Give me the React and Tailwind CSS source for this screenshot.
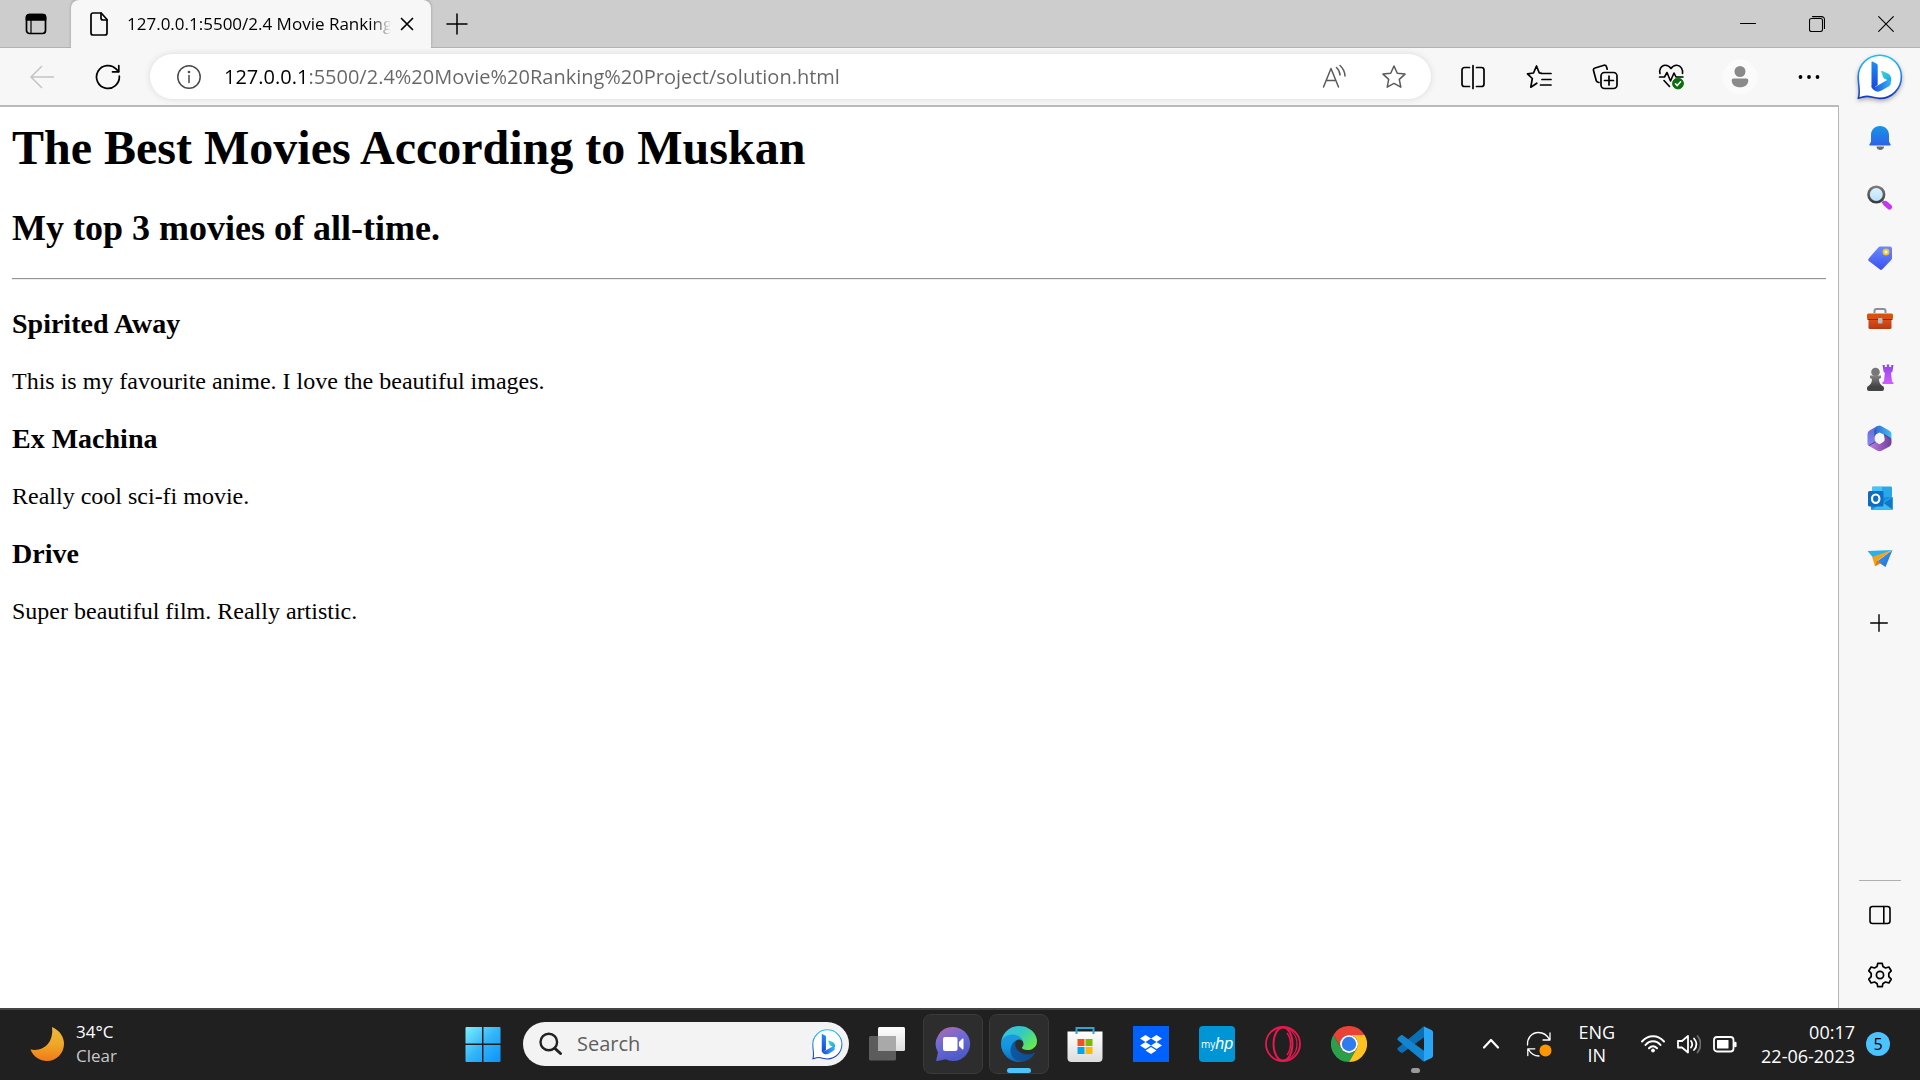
import React from "react";

const ui = "font-['Open_Sans','Noto_Sans',sans-serif]";

function Line({ size = 24, sw = 1.5, className = "", children, box }) {
  return (
    <svg
      width={size}
      height={size}
      viewBox={`0 0 ${box || size} ${box || size}`}
      fill="none"
      stroke="currentColor"
      strokeWidth={sw}
      strokeLinecap="round"
      strokeLinejoin="round"
      className={`shrink-0 ${className}`}
      aria-hidden="true"
    >
      {children}
    </svg>
  );
}

function Art({ size = 26, box, children, className = "" }) {
  return (
    <svg
      width={size}
      height={size}
      viewBox={`0 0 ${box || size} ${box || size}`}
      className={`shrink-0 ${className}`}
      aria-hidden="true"
    >
      {children}
    </svg>
  );
}

function Grad({ id, stops, x1 = 0, y1 = 0, x2 = 0, y2 = 1 }) {
  return (
    <linearGradient id={id} x1={x1} y1={y1} x2={x2} y2={y2}>
      {stops.map((c, i) => (
        <stop key={c + i} offset={i / (stops.length - 1)} stopColor={c} />
      ))}
    </linearGradient>
  );
}

function Bing({ size, id, className }) {
  return (
    <Art size={size} box={46} className={className}>
      <defs>
        <Grad id={id + "a"} stops={["#14c3f5", "#1f7cf0", "#1238c4"]} />
        <Grad id={id + "b"} stops={["#1d8df5", "#1747dd"]} />
        <Grad id={id + "c"} stops={["#36e0c8", "#1f9cf5"]} x2={1} />
        <Grad id={id + "d"} stops={["#1648dc", "#36b4fa"]} x2={1} y2={0} />
      </defs>
      <path
        d="M1.3 44.3C3.6 38 1.2 31 1.2 22.8A21.6 21.6 0 1 1 22.8 44.4C17.5 44.4 14 42.2 9.5 42.4C6.500 42.500 4 43.500 1.300 44.300Z"
        fill="#fff"
        stroke={`url(#${id}a)`}
        strokeWidth="1.6"
        strokeLinejoin="round"
      />
      <path d="M14.5 8.500C14.500 7.600 15 7.400 15.800 7.800L19.300 9.500C20.200 10 20.700 10.600 20.700 11.600V31L15.500 34.500C14.800 34 14.500 33.200 14.500 32Z" fill={`url(#${id}b)`} />
      <path d="M24.200 17.800C24 17 24.600 16.700 25.400 17L30.500 19.300C33.500 20.700 35 24 34 28L27.800 24.800C26.800 24.300 26.300 23.500 26 22.700Z" fill={`url(#${id}c)`} />
      <path d="M14.600 31.500C15.500 33.500 17.800 33.200 19.500 32.200L30.600 25.800C33 26.500 34.500 28 33.800 30C33.500 31 32.800 31.700 32 32.200L24.500 36.600C22 38 19.500 38 17.500 36.600C15.500 35.300 14.500 33.500 14.600 31.500Z" fill={`url(#${id}d)`} />
    </Art>
  );
}

function TitleBar() {
  return (
    <header className="flex h-12 shrink-0 border-b border-[#b2b2b2] bg-[#cdcdcd]">
      <button aria-label="Tab actions menu" className="flex w-[71px] items-center justify-center">
        <Line size={22} sw={1.7}>
          <rect x="1.500" y="1.500" width="19" height="19" rx="3" />
          <path d="M1.500 4a2.500 2.500 0 0 1 2.500-2.500h14A2.500 2.500 0 0 1 20.500 4v3h-19Z" fill="currentColor" />
          <path d="M6 7v13" strokeWidth="1.200" />
        </Line>
      </button>
      <div className="-mb-px flex w-[360px] items-center rounded-t-lg bg-[#f7f7f7] pl-4 pr-[17px] shadow-[0_-1px_3px_rgba(0,0,0,0.25)] [clip-path:inset(0_-4px_0_-4px)]">
        <Line size={24} sw={1.7}>
          <path d="M6 1h8.200L20 7.500V21a2 2 0 0 1-2 2H6a2 2 0 0 1-2-2V3a2 2 0 0 1 2-2Z" />
          <path d="M14 1v5a2 2 0 0 0 2 2h4" />
        </Line>
        <span className="ml-4 w-[270px] whitespace-nowrap text-[17px] leading-6 text-black [mask-image:linear-gradient(to_right,black_244px,transparent_264px)]">
          127.0.0.1:5500/2.4 Movie Ranking
        </span>
        <button aria-label="Close tab" className="ml-auto">
          <Line size={14} sw={1.7}>
            <path d="M1.500 1.500l11 11M12.500 1.500l-11 11" />
          </Line>
        </button>
      </div>
      <button aria-label="New tab" className="flex w-[52px] items-center justify-center">
        <Line size={22} sw={1.500}>
          <path d="M11 1v20M1 11h20" />
        </Line>
      </button>
      <div className="ml-auto flex text-black">
        <button aria-label="Minimize" className="flex w-[69px] items-center justify-center">
          <Line size={16} sw={1}><path d="M.5 7.500h15" /></Line>
        </button>
        <button aria-label="Restore" className="flex w-[69px] items-center justify-center">
          <Line size={16} sw={1.100}>
            <rect x=".5" y="2.500" width="13" height="13" rx="2" />
            <path d="M3.500 .6H12.500a3 3 0 0 1 3 3V12.500" />
          </Line>
        </button>
        <button aria-label="Close" className="flex w-[69px] items-center justify-center">
          <Line size={16} sw={1.100}><path d="M.7 .7l14.600 14.600M15.300 .7L.7 15.300" /></Line>
        </button>
      </div>
    </header>
  );
}

function ToolButton({ label, children, className = "text-black" }) {
  return (
    <button aria-label={label} className={`flex h-11 w-[60px] shrink-0 items-center justify-center ${className}`}>
      {children}
    </button>
  );
}

const STAR = "M13 2l3.300 7.200 7.700.9-5.700 5.300 1.500 7.800L13 19.400 6.200 23.200l1.500-7.800L2 10.100l7.700-.9Z";

function Toolbar() {
  return (
    <div className="flex h-[59px] shrink-0 items-center border-b-2 border-[#bababa] bg-[#f7f7f7] pl-3">
      <div className="flex gap-[6px]">
        <ToolButton label="Back" className="text-[#c4c4c4]">
          <Line size={26}><path d="M24.500 13H2M12.500 2.500L2 13l10.500 10.500" /></Line>
        </ToolButton>
        <ToolButton label="Refresh">
          <Line size={26} sw={1.700}>
            <path d="M24.300 12A11.400 11.400 0 1 1 21.300 5.200L23.500 7.500" />
            <path d="M23.800 1.500V7.800H17.500" />
          </Line>
        </ToolButton>
      </div>
      <div className="ml-3 flex h-[45px] flex-1 items-center rounded-full bg-white pl-[27px] pr-6 shadow-[0_0_7px_rgba(0,0,0,0.12)]">
        <button aria-label="View site information" className="text-[#4a4a4a]">
          <Line size={24}>
            <circle cx="12" cy="12" r="11.200" />
            <path d="M12 10.500v7" />
            <circle cx="12" cy="7" r=".6" fill="currentColor" />
          </Line>
        </button>
        <input
          aria-label="Address and search bar"
          defaultValue="127.0.0.1:5500/2.4%20Movie%20Ranking%20Project/solution.html"
          className="ml-[23px] h-8 min-w-0 flex-1 bg-[linear-gradient(to_right,#000_82px,#666_82px)] bg-clip-text text-[20px] text-transparent outline-none"
        />
        <div className="flex items-center gap-[33px] text-[#5a5a5a]">
          <button aria-label="Read aloud">
            <Line size={26}>
              <path d="M1.500 23L9 4.500 16.500 23M4.300 16.500h9.500" />
              <path d="M14.500 3.500a11 11 0 0 1 3.500 7.500M18 1.500a15 15 0 0 1 5 10.500" />
            </Line>
          </button>
          <button aria-label="Add this page to favorites">
            <Line size={26}><path d={STAR} /></Line>
          </button>
        </div>
      </div>
      <div className="ml-3 flex gap-[6px]">
        <ToolButton label="Split screen">
          <Line size={26} sw={1.700}>
            <path d="M9.500 3.500H4.500a2.500 2.500 0 0 0-2.500 2.500v14a2.500 2.500 0 0 0 2.500 2.500h5M16.500 3.500h5A2.500 2.500 0 0 1 24 6v14a2.500 2.500 0 0 1-2.500 2.500h-5M13 1.500v23" />
          </Line>
        </ToolButton>
        <ToolButton label="Favorites">
          <Line size={26} sw={1.700}>
            <path d="M15 9.200l-1.700-.2L10.500 2 7.500 9 1.500 9.800l4.800 4.700-1.500 8.700 6-4" />
            <path d="M15.500 9.500H25M16 15.500h9M14.500 21H25" />
          </Line>
        </ToolButton>
        <ToolButton label="Collections">
          <Line size={26} sw={1.700}>
            <path d="M7 18.500l-1.500-.5a2 2 0 0 1-1.300-1.500L1.500 6.500A2 2 0 0 1 3 4L12 1.300a2 2 0 0 1 2.500 1.500l.7 2.400" />
            <rect x="9" y="8.500" width="16" height="16" rx="3.500" />
            <path d="M17 12v9M12.500 16.500h9" />
          </Line>
        </ToolButton>
        <ToolButton label="Browser essentials">
          <Line size={27} sw={1.600}>
            <path d="M2 10.500C1 7 2.800 2.500 7 2.200c3-.2 4.700 1.300 6 3.300 1.300-2 3-3.500 6-3.300 4.200.3 6 4.800 5.500 8.300" />
            <path d="M1.500 14h5L9 9.500l3.500 8.500 3.500-8 2 4h7M6 17.500l5.500 6" />
            <circle cx="20" cy="20.500" r="5.500" fill="#0b6f12" stroke="#0b6f12" strokeWidth=".8" />
            <path d="M17.500 20.800l1.800 1.800 3.300-3.800" stroke="#fff" strokeWidth="1.500" />
          </Line>
        </ToolButton>
      </div>
      <div className="ml-[9px] flex gap-[9px]">
        <ToolButton label="Profile">
          <Art size={36}>
            <circle cx="18" cy="18" r="17.500" fill="#fbfbfb" />
            <circle cx="18" cy="12.500" r="5.500" fill="#8a8a8a" />
            <path d="M11.500 19.500h13a1.800 1.800 0 0 1 1.800 1.800c0 4.500-3.500 7-8.300 7s-8.300-2.500-8.300-7a1.800 1.800 0 0 1 1.800-1.800Z" fill="#8a8a8a" />
          </Art>
        </ToolButton>
        <ToolButton label="Settings and more">
          <Art size={22}>
            {[2.500, 11, 19.500].map((x) => <circle key={x} cx={x} cy="11" r="1.900" />)}
          </Art>
        </ToolButton>
      </div>
    </div>
  );
}

const movies = [
  ["Spirited Away", "This is my favourite anime. I love the beautiful images."],
  ["Ex Machina", "Really cool sci-fi movie."],
  ["Drive", "Super beautiful film. Really artistic."],
];

function Page() {
  return (
    <main className="min-h-0 flex-1 border-r border-[#b5b5b5] bg-white px-3 pt-[13px] font-['Liberation_Serif',serif] text-black">
      <h1 className="mb-8 text-[48px] font-bold leading-[55px]">The Best Movies According to Muskan</h1>
      <h2 className="mb-[29px] text-[36px] font-bold leading-[42px]">My top 3 movies of all-time.</h2>
      <hr className="mb-[29px] h-px border-0 bg-[#949494] shadow-[0_1px_0_#eeeeee]" />
      {movies.map(([name, note]) => (
        <section key={name} className="mb-7">
          <h3 className="mb-7 text-[28px] font-bold leading-8">{name}</h3>
          <p className="text-[24px] leading-[27px]">{note}</p>
        </section>
      ))}
    </main>
  );
}

function SideIcons() {
  return [
    ["Notifications", (
      <Art>
        <defs><Grad id="bell" stops={["#1a94e6", "#2b63e8"]} /></defs>
        <path d="M9.500 21.500h7.500c0 2-1.500 3.500-3.700 3.500s-3.800-1.500-3.800-3.500Z" fill="#6b6f75" />
        <path d="M13 1c5.500 0 9 4 9 9v6.500l1.700 3.200c.2.500 0 .8-.6.8H2.900c-.6 0-.8-.3-.6-.8L4 16.500V10C4 5 7.500 1 13 1Z" fill="url(#bell)" />
      </Art>
    )],
    ["Search", (
      <Art>
        <defs>
          <Grad id="lens" stops={["#e2f2ff", "#b5e0f8"]} />
          <Grad id="rim" stops={["#7a7a7a", "#3c3c3c"]} />
        </defs>
        <path d="M15.500 16.500l3 2.500" stroke="#777" strokeWidth="3" />
        <circle cx="9.300" cy="9.500" r="7.800" fill="url(#lens)" stroke="url(#rim)" strokeWidth="2.600" />
        <path d="M18.500 18.500l4 3.500" stroke="#c436f2" strokeWidth="5" strokeLinecap="round" />
      </Art>
    )],
    ["Shopping", (
      <Art>
        <defs><Grad id="tag" stops={["#6a8cff", "#3d50ec"]} /></defs>
        <path d="M13.500 1.500h9.500a2 2 0 0 1 2 2v9.500c0 1-.3 1.700-1 2.300l-8.700 9c-.8.800-1.800.8-2.600 0L1.800 16c-.8-.8-.8-1.800 0-2.600l9.500-11c.6-.6 1.200-.9 2.200-.9Z" fill="url(#tag)" />
        <circle cx="19" cy="7" r="2.600" fill="#e6eaff" stroke="#f5c518" strokeWidth="1.700" />
      </Art>
    )],
    ["Tools", (
      <Art size={28}>
        <defs><Grad id="case" stops={["#e3561f", "#b83a10"]} /></defs>
        <path d="M8.500 9V7a2 2 0 0 1 2-2h7a2 2 0 0 1 2 2v2" fill="none" stroke="#8b8f96" strokeWidth="2" />
        <rect x="2.500" y="13" width="23" height="12" rx="1.500" fill="url(#case)" />
        <path d="M2.500 9.500h23a1.500 1.500 0 0 1 1.500 1.500v2.800c0 .8-.7 1.500-1.500 1.500h-23C1.700 15.300 1 14.600 1 13.800V11a1.500 1.500 0 0 1 1.500-1.500Z" fill="#d9500f" />
        <path d="M1.500 15.500h25" stroke="#8e2c0a" />
        <rect x="12" y="14" width="4.500" height="5.500" rx="1" fill="#b9bdc3" />
      </Art>
    )],
    ["Games", (
      <Art size={28}>
        <defs>
          <Grad id="rook" stops={["#8f45e8", "#d65bff"]} />
          <Grad id="pawn" stops={["#858585", "#444"]} />
        </defs>
        <path d="M16.500 1h2.300v2h2V.5h2.400V3h2V1h2.300l-1 6.500-1.500 1.500 1 8.500 1.500 1.200V20H16.500v-2l1.500-.8L18.800 9l-1.300-1.500Z" fill="url(#rook)" />
        <circle cx="9.500" cy="8" r="4.300" fill="#777" />
        <path d="M4 11.500h11v2.500l-2 .9c.2 3.500 1 5 4 7.500H2c3-2.500 3.800-4 4-7.500l-2-.9Z" fill="url(#pawn)" />
        <rect x="1" y="22" width="17" height="5" rx="2" fill="#444" />
      </Art>
    )],
    ["Microsoft 365", (
      <Art size={27}>
        <defs>
          <Grad id="m1" stops={["#5b6ad8", "#8a86f2"]} />
          <Grad id="m2" stops={["#2d6bd2", "#44c0f0"]} x2={1} y2={0} />
          <Grad id="m3" stops={["#c07fdc", "#713f9f"]} x2={1} y2={0} />
        </defs>
        <path d="M10 1.700L3.500 5.500A4 4 0 0 0 1.500 9v9.500c0 1 .4 1.600 1 2l6.500-3.300V9L14.500 6V.7c-2 0-3.500.4-4.500 1Z" fill="url(#m1)" />
        <path d="M9 10V4.500c0-1.500.8-2.300 2-3 1.700-.9 3.500-.9 5 0l7.500 4.200A4 4 0 0 1 25.500 9v6L17.500 9.500l-4-2Z" fill="url(#m2)" />
        <path d="M2.300 20.200L9 16.500l4.500 2.800 5-3.500-.5-6.500 6 3.500c1 .8 1.500 1.500 1.500 3V18a4 4 0 0 1-2 3.400L16 25.500a5 5 0 0 1-5 0L3.500 21.300c-.5-.3-1-.6-1.200-1.100Z" fill="url(#m3)" />
        <path d="M9 4.500V11M24.500 13.500L18 9.500M3 20.500l7-4" stroke="#2b3f92" strokeWidth=".9" fill="none" />
        <circle cx="13.500" cy="13.500" r="4.900" fill="#f7f7f7" />
      </Art>
    )],
    ["Outlook", (
      <Art>
        <rect x="5" y="1.500" width="20" height="12" rx="1" fill="#28a8ea" />
        <rect x="5" y="2" width="10" height="10" fill="#50d0ff" opacity=".7" />
        <path d="M4 12h21.500v12a1 1 0 0 1-1 1H5a1 1 0 0 1-1-1Z" fill="#1490df" />
        <path d="M4.500 24.800L17 17l8.500-5v13Z" fill="#3cbcf2" />
        <path d="M25.500 12.500v12L16.500 18Z" fill="#0f78c8" />
        <rect x="1" y="6" width="15.500" height="15.500" rx="1.500" fill="#0f6cc4" />
        <ellipse cx="8.700" cy="13.700" rx="3.700" ry="4.200" fill="none" stroke="#fff" strokeWidth="2.200" />
      </Art>
    )],
    ["Drop", (
      <Art>
        <defs><Grad id="pl" stops={["#2fa3f2", "#2867e0"]} x2={1} y2={1} /></defs>
        <path d="M25.500 5L18.500 22 10 16.500Z" fill="url(#pl)" />
        <path d="M.5 6L25.500 5 6 12.500Z" fill="#2bb0ee" />
        <path d="M25.500 5L5.200 12 8 21.500 11 15.500Z" fill="#f5a21b" />
        <path d="M8 21.500L10 15.500l4 2.300Z" fill="#d97a12" />
      </Art>
    )],
  ];
}

function Sidebar() {
  return (
    <aside className="flex w-[81px] shrink-0 flex-col items-center bg-[#f7f7f7]">
      <button aria-label="Discover" className="mt-[6px] mb-[9px] flex h-[45px] w-[60px] items-center justify-center">
        <Bing size={46} id="side" className="drop-shadow-[0_2px_2px_rgba(0,0,0,0.3)]" />
      </button>
      {SideIcons().map(([name, icon]) => (
        <button key={name} aria-label={name} className="flex h-[60px] w-[60px] items-center justify-center">{icon}</button>
      ))}
      <button aria-label="Customize" className="mt-1 flex h-[60px] w-[60px] items-center justify-center pt-[2px] pr-[2px] text-black">
        <Line size={18} sw={1.400}><path d="M9 .7v16.600M.7 9h16.600" /></Line>
      </button>
      <div className="mt-auto h-px w-[42px] bg-[#b0b0b0]" />
      <button aria-label="Hide sidebar" className="mt-1 flex h-[60px] w-[60px] items-center justify-center text-black">
        <Line size={22} sw={1.600}>
          <rect x="1" y="2.500" width="20" height="17" rx="2.500" />
          <path d="M14.800 2.500v17" />
        </Line>
      </button>
      <button aria-label="Settings" className="mb-[3px] flex h-[60px] w-[60px] items-center justify-center text-black">
        <Line size={26} sw={1.700}>
          <path d="M10.800 1.300h4.400l.8 3.300 2.500 1.400 3.400-1 2.300 3.800-2.400 2.500v3.400l2.400 2.500-2.300 3.800-3.400-1L16 21.400l-.8 3.300h-4.400l-.8-3.300L7.500 20l-3.400 1-2.300-3.800 2.400-2.500v-3.400L1.800 8.800 4.100 5l3.400 1L10 4.600Z" />
          <circle cx="13" cy="13" r="3.600" />
        </Line>
      </button>
    </aside>
  );
}

function Tile({ label, active, mark, children }) {
  return (
    <button
      aria-label={label}
      className={`relative flex h-[60px] w-[60px] shrink-0 items-center justify-center rounded-lg border ${active ? "border-[#3a3a3a] bg-[#2d2d2d]" : "border-transparent"}`}
    >
      {children}
      {mark === "wide" && <span className="absolute bottom-0 h-[5px] w-6 rounded-full bg-[#4cc2ff]" />}
      {mark === "dot" && <span className="absolute bottom-0 h-[5px] w-[9px] rounded-full bg-[#9a9a9a]" />}
    </button>
  );
}

function Apps() {
  return (
    <div className="flex gap-[6px]">
      <Tile label="Task view">
        <Art size={36}>
          <defs><Grad id="tv" stops={["#fff", "#ddd"]} /></defs>
          <rect x="9" y="1" width="27" height="24" rx="1.500" fill="url(#tv)" />
          <rect x="0" y="10" width="27" height="24.500" rx="1.500" fill="#6b6b6b" opacity=".8" />
          <rect x="9" y="10" width="18" height="15" fill="#a9a9a9" />
        </Art>
      </Tile>
      <Tile label="Chat" active>
        <Art size={36}>
          <defs><Grad id="chat" stops={["#b56aa8", "#6c6ad8", "#5059c9"]} x2={0.4} /></defs>
          <path d="M18 1A17 17 0 1 1 10.500 33.200L2.500 35c-.9.200-1.400-.4-1.200-1.200L3 26.500A17 17 0 0 1 18 1Z" fill="url(#chat)" />
          <rect x="8" y="11" width="14.500" height="14" rx="2" fill="#fff" />
          <path d="M24 16l3.200-3.200c.6-.5 1.300-.2 1.300.6v9.200c0 .8-.7 1.100-1.300.6L24 20Z" fill="#fff" />
        </Art>
      </Tile>
      <Tile label="Microsoft Edge" active mark="wide">
        <Art size={36} box={256}>
          <defs>
            <Grad id="e1" stops={["#0c59a4", "#114a8b"]} x2={1} y2={0} />
            <Grad id="e2" stops={["#1b9de2", "#1595df", "#0c67b5"]} />
            <Grad id="e3" stops={["#35c1f1", "#34c9c4", "#66eb4e"]} x2={1} y2={.7} />
          </defs>
          <path fill="url(#e1)" d="M235.680 190.500a93.730 93.730 0 0 1-10.540 4.710 101.870 101.870 0 0 1-35.900 6.460c-47.320 0-88.540-32.550-88.540-74.320A31.480 31.480 0 0 1 117.130 100c-42.800 1.800-53.800 46.400-53.800 72.530 0 73.880 68.090 81.370 82.760 81.370 7.910 0 19.840-2.300 27-4.560l1.310-.44a128.340 128.340 0 0 0 66.600-52.800 4 4 0 0 0-5.320-5.600Z" />
          <path fill="url(#e2)" d="M105.730 241.420A79.200 79.200 0 0 1 83 220.080a80.720 80.720 0 0 1 29.530-120.290c3.120-1.470 8.450-4.130 15.540-4a32.350 32.350 0 0 1 25.690 13 31.880 31.880 0 0 1 6.360 18.660c0-.21 24.460-79.600-80-79.600-43.900 0-80 41.660-80 78.210a130.150 130.150 0 0 0 12.110 56 128 128 0 0 0 156.380 67.110 75.550 75.550 0 0 1-62.780-8Z" />
          <path fill="url(#e3)" d="M152.290 148.860c-.81 1.050-3.300 2.500-3.300 5.660 0 2.610 1.700 5.120 4.720 7.230 14.380 10 41.490 8.680 41.560 8.680a59.560 59.560 0 0 0 30.270-8.350 61.380 61.380 0 0 0 30.430-52.880c.26-22.410-8-37.310-11.340-43.910C223.460 23.840 177.720 0 128 0A128 128 0 0 0 0 126.200c.48-36.540 36.800-66.050 80-66.050 3.500 0 23.460.34 42 10.070 16.340 8.580 24.900 18.940 30.850 29.210 6.180 10.670 7.280 24.150 7.280 29.520s-2.740 13.330-7.840 19.910Z" />
        </Art>
      </Tile>
      <Tile label="Microsoft Store">
        <Art size={36}>
          <defs><Grad id="st" stops={["#fff", "#dcdcdc"]} /></defs>
          <path d="M.5 5.500h35V32a4 4 0 0 1-4 4h-27a4 4 0 0 1-4-4Z" fill="url(#st)" />
          <path d="M9.500 8V2h17v6" fill="none" stroke="#2aa5d6" strokeWidth="2" />
          <path d="M10.500 13h7v7h-7Z" fill="#f25022" />
          <path d="M18.500 13h7v7h-7Z" fill="#7fba00" />
          <path d="M10.500 21h7v7h-7Z" fill="#00a4ef" />
          <path d="M18.500 21h7v7h-7Z" fill="#ffb900" />
        </Art>
      </Tile>
      <Tile label="Dropbox">
        <Art size={36}>
          <rect width="36" height="36" fill="#0061fe" />
          <path d="M12.500 9l5.500 3.500-5.500 3.500L7 12.500ZM23.500 9l5.500 3.500-5.500 3.500-5.500-3.500ZM12.500 16l5.500 3.500-5.500 3.500L7 19.500ZM23.500 16l5.500 3.500-5.500 3.500-5.500-3.500ZM18 21l5.500 3.500L18 28l-5.500-3.500Z" fill="#fff" />
        </Art>
      </Tile>
      <Tile label="myHP">
        <span className="flex h-9 w-9 items-center justify-center rounded-sm bg-[#0096d6] text-white">
          <span className="text-[10px]">my</span>
          <span className="font-['Liberation_Sans',sans-serif] text-[16px] italic leading-5">hp</span>
        </span>
      </Tile>
      <Tile label="Opera GX">
        <Art size={36}>
          <g fill="none" stroke="#e6194f">
            <circle cx="18" cy="18" r="17" strokeWidth="1.800" />
            <ellipse cx="18" cy="18" rx="9.500" ry="16.500" strokeWidth="2" />
            <path d="M18 1.500C24 2 32 7 32 18s-8 16-14 16.500" strokeWidth="1.200" />
            <path d="M22 7c2.500 3 3.500 7 3.500 11S24.500 26 22 29" strokeWidth="1.500" />
          </g>
        </Art>
      </Tile>
      <Tile label="Google Chrome">
        <Art size={36} box={48}>
          <path d="M24 12H44.800A24 24 0 0 0 3.200 12L13.600 30A12 12 0 0 1 24 12Z" fill="#ea4335" />
          <path d="M13.600 30L3.200 12A24 24 0 0 0 24 48L34.400 30A12 12 0 0 1 13.600 30Z" fill="#2b9f49" />
          <path d="M34.400 30L24 48A24 24 0 0 0 44.800 12H24A12 12 0 0 1 34.400 30Z" fill="#fcc31e" />
          <circle cx="24" cy="24" r="12" fill="#fff" />
          <circle cx="24" cy="24" r="9.600" fill="#2f7bf0" />
        </Art>
      </Tile>
      <Tile label="Visual Studio Code" mark="dot">
        <Art size={36}>
          <path d="M26.500 .5L28 1v9.500L6 26.500c-.8.600-1.600.6-2.300 0L1 24.200c-.8-.8-.8-1.800 0-2.500Z" fill="#0b6fb5" />
          <path d="M1 11.800L3.700 9.500c.7-.6 1.500-.6 2.300 0L28 25.500V35l-1.500.5L1 14.300c-.8-.7-.8-1.700 0-2.500Z" fill="#1385d0" />
          <path d="M27 .4L34.500 4c.9.500 1.500 1.200 1.500 2.200v23.600c0 1-.6 1.700-1.500 2.200L27 35.600Z" fill="#28a5f5" />
        </Art>
      </Tile>
    </div>
  );
}

function Taskbar() {
  return (
    <footer className="flex h-[72px] shrink-0 items-center border-t-2 border-[#444444] bg-[#202020] pb-[2px] pr-[22px] text-[18px] leading-6 text-white">
      <div className="flex-1">
        <button className="flex items-center pl-[29px] text-left">
          <Art size={36}>
            <defs><Grad id="moon" stops={["#e9b93a", "#f0a828", "#ef7a1a"]} /></defs>
            <path d="M23 1C31 4.500 35 11 35 18A17 17 0 0 1 18 35C11 35 4.500 31 1.500 23.500 15 26 25 16 23 1Z" fill="url(#moon)" />
          </Art>
          <span className="ml-[11px]">
            <span className="block text-[17px]">34°C</span>
            <span className="block text-[17px] text-[#c8c8c8]">Clear</span>
          </span>
        </button>
      </div>
      <nav aria-label="Taskbar" className="flex items-center">
        <Tile label="Start">
          <Art size={36}>
            <defs><Grad id="win" stops={["#7cefff", "#33b5f8", "#0a93fb"]} x2={1} /></defs>
            <path d="M1.500 1H17v16.500H.5V2a1 1 0 0 1 1-1ZM18.500 1H34.500a1 1 0 0 1 1 1v15.500h-17ZM.5 19H17v17H1.500a1 1 0 0 1-1-1ZM18.500 19h17v16a1 1 0 0 1-1 1h-16Z" fill="url(#win)" />
          </Art>
        </Tile>
        <label className="ml-[10px] mr-2 flex h-11 w-[326px] items-center rounded-full bg-[#f3f3f3] pl-4 pr-[6px] text-[#222]">
          <Line size={24} sw={2.400}>
            <circle cx="9.800" cy="10" r="8.300" />
            <path d="M16 16.500l5.500 5" strokeWidth="3" />
          </Line>
          <input
            aria-label="Search"
            placeholder="Search"
            className="ml-[14px] min-w-0 flex-1 bg-transparent text-[20px] outline-none placeholder:text-[#606060]"
          />
          <Bing size={31} id="task" />
        </label>
        <Apps />
      </nav>
      <div className="flex flex-1 items-center justify-end">
        <button aria-label="Show hidden icons">
          <Line size={18} sw={2.200}><path d="M2 12.500l7-7.500 7 7.500" /></Line>
        </button>
        <button aria-label="Updates available" className="ml-[26px]">
          <Line size={26} sw={1.300}>
            <path d="M1.500 14C1 8 5 1.500 12.500 1.500c5 0 8.500 2.500 11 7M24 2v7h-7M1.800 24.500V17.800h7M2.500 18.500C5 23 8 25 13 25" />
            <circle cx="19.500" cy="19.500" r="6" fill="#ff9500" stroke="none" />
          </Line>
        </button>
        <button className="ml-[26px] text-center text-[18px] leading-[23px]">
          <span className="block">ENG</span>
          <span className="block">IN</span>
        </button>
        <button aria-label="Network, volume and battery" className="ml-[26px] flex items-center gap-3">
          <Line size={24} sw={2}>
            <path d="M1 9.500C7 2.500 17 2.500 23 9.500M4.500 13c4-5 11-5 15 0M8 16.200c2.500-2.700 5.500-2.700 8 0" />
            <circle cx="12" cy="18.500" r="1.500" fill="currentColor" strokeWidth="1" />
          </Line>
          <Line size={24} sw={1.800}>
            <path d="M1 9v6.500h4L11 20.500V4L5 9Z" />
            <path d="M14 9c1.500 2 1.500 4.500 0 6.500M17 6.500c3 3.500 3 8 0 11.500" />
            <path d="M20.500 4c4 5 4 11 0 16.500" stroke="#6b6b6b" />
          </Line>
          <Line size={24} sw={1.800}>
            <rect x="1" y="5" width="19.500" height="14.500" rx="3" />
            <rect x="4" y="8" width="11.500" height="8.500" rx=".5" fill="currentColor" stroke="none" />
            <path d="M22.300 11v3" strokeWidth="2.500" />
          </Line>
        </button>
        <button className="ml-6 flex items-center">
          <span className="text-right">
            <span className="block">00:17</span>
            <span className="block">22-06-2023</span>
          </span>
          <span className="ml-[11px] mr-2 flex h-6 w-6 items-center justify-center rounded-full bg-[#4cc2ff] text-[16px] text-black">5</span>
        </button>
      </div>
    </footer>
  );
}

export default function App() {
  return (
    <div className={`flex h-screen flex-col overflow-hidden bg-[#f7f7f7] ${ui}`}>
      <TitleBar />
      <div className="flex min-h-0 flex-1">
        <div className="flex min-w-0 flex-1 flex-col">
          <Toolbar />
          <Page />
        </div>
        <Sidebar />
      </div>
      <Taskbar />
    </div>
  );
}
